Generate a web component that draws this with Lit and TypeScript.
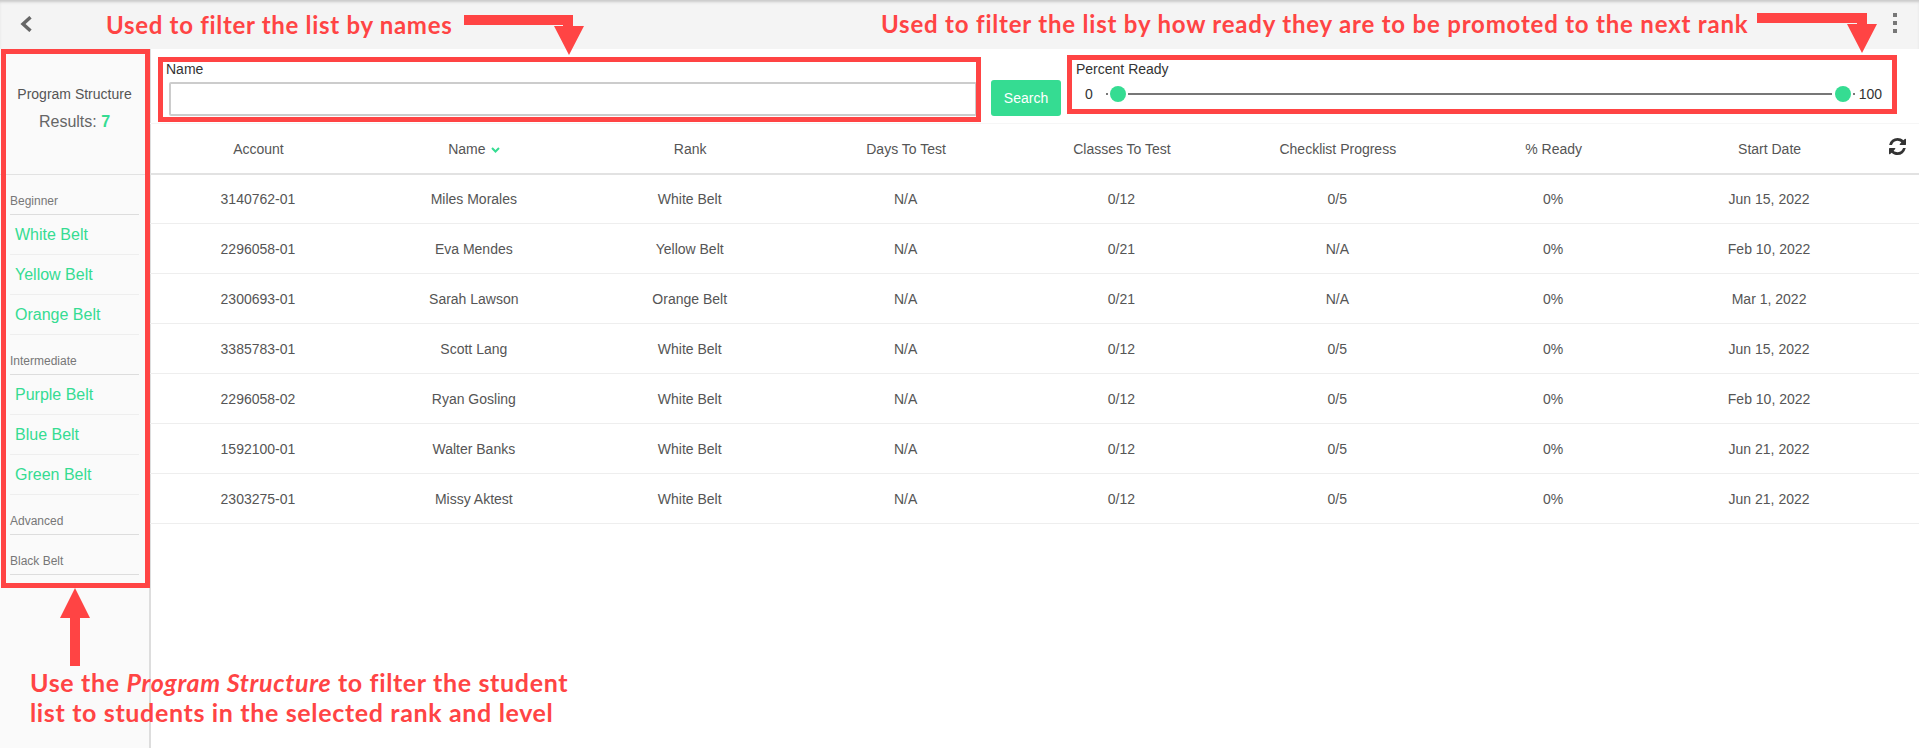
import { LitElement, html, css } from 'lit';
import { customElement } from 'lit/decorators.js';

const columns = ['Account', 'Name', 'Rank', 'Days To Test', 'Classes To Test', 'Checklist Progress', '% Ready', 'Start Date'];

const students = [
  ['3140762-01', 'Miles Morales', 'White Belt', 'N/A', '0/12', '0/5', '0%', 'Jun 15, 2022'],
  ['2296058-01', 'Eva Mendes', 'Yellow Belt', 'N/A', '0/21', 'N/A', '0%', 'Feb 10, 2022'],
  ['2300693-01', 'Sarah Lawson', 'Orange Belt', 'N/A', '0/21', 'N/A', '0%', 'Mar 1, 2022'],
  ['3385783-01', 'Scott Lang', 'White Belt', 'N/A', '0/12', '0/5', '0%', 'Jun 15, 2022'],
  ['2296058-02', 'Ryan Gosling', 'White Belt', 'N/A', '0/12', '0/5', '0%', 'Feb 10, 2022'],
  ['1592100-01', 'Walter Banks', 'White Belt', 'N/A', '0/12', '0/5', '0%', 'Jun 21, 2022'],
  ['2303275-01', 'Missy Aktest', 'White Belt', 'N/A', '0/12', '0/5', '0%', 'Jun 21, 2022'],
];

const levels = [
  { name: 'Beginner', ranks: ['White Belt', 'Yellow Belt', 'Orange Belt'] },
  { name: 'Intermediate', ranks: ['Purple Belt', 'Blue Belt', 'Green Belt'] },
  { name: 'Advanced', ranks: [] },
  { name: 'Black Belt', ranks: [] },
];

@customElement('app-root')
export class AppRoot extends LitElement {
  static styles = css`
    :host {
      display: block;
      position: relative;
      width: 100%;
      height: 748px;
      overflow: hidden;
      font-family: 'Liberation Sans', Arial, sans-serif;
      font-size: 14px;
      color: #555;
      background: #fff;
    }
    .topbar {
      display: flex;
      align-items: center;
      justify-content: space-between;
      height: 49px;
      padding: 0 22px 0 20px;
      box-sizing: border-box;
      background: #f4f4f4;
      box-shadow: inset 0 3px 3px -1px #c8c8c8;
    }
    .back {
      display: block;
      width: 12px;
      height: 16px;
      margin-top: -2px;
    }
    .dots {
      display: flex;
      flex-direction: column;
      gap: 4px;
      margin-top: -3px;
    }
    .dots span {
      width: 4px;
      height: 4px;
      background: #777;
    }
    .body {
      display: flex;
      height: 699px;
    }
    .side {
      flex: 0 0 151px;
      box-sizing: border-box;
      background: #fafafa;
      border-right: 2px solid #ddd;
    }
    .side-head {
      display: flex;
      flex-direction: column;
      align-items: center;
      height: 126px;
      padding-top: 36px;
      box-sizing: border-box;
      border-bottom: 1px solid #e2e2e2;
    }
    .side-title {
      line-height: 18px;
    }
    .results {
      margin-top: 9px;
      font-size: 16px;
      line-height: 20px;
      color: #666;
    }
    .results b {
      color: #35dc92;
    }
    .side-list {
      padding: 0 10px;
    }
    .level {
      display: flex;
      align-items: flex-end;
      height: 40px;
      padding-bottom: 6px;
      box-sizing: border-box;
      font-size: 12px;
      line-height: 14px;
      color: #777;
      border-bottom: 1px solid #ddd;
    }
    .rank {
      display: flex;
      align-items: center;
      height: 40px;
      padding-left: 5px;
      box-sizing: border-box;
      font-size: 16px;
      color: #35dc92;
      border-bottom: 1px solid #eee;
    }
    .main {
      flex: 1;
      min-width: 0;
      margin-left: -1px;
    }
    .filters {
      display: grid;
      grid-template-columns: 808px 70px 1fr;
      column-gap: 14px;
      height: 75px;
      padding: 0 37px 0 19px;
      box-sizing: border-box;
      border-bottom: 1px solid #f6f6f6;
    }
    .field {
      display: flex;
      flex-direction: column;
      padding-top: 12px;
      box-sizing: border-box;
      color: #333;
    }
    .field label {
      line-height: 16px;
      margin-left: -3px;
    }
    .field input {
      height: 34px;
      margin-top: 5px;
      padding: 0;
      box-sizing: border-box;
      background: #fff;
      border: 2px solid #ccc;
      border-radius: 2px;
      outline: none;
    }
    .search {
      align-self: end;
      height: 36px;
      margin-bottom: 7px;
      padding: 0;
      border: none;
      border-radius: 3px;
      background: #35dc92;
      color: #fff;
      font: inherit;
    }
    .range {
      margin-left: 4px;
    }
    .slider {
      display: flex;
      align-items: center;
      height: 16px;
      margin-top: 9px;
    }
    .slider .min {
      margin-left: 6px;
      margin-right: 13px;
    }
    .slider .tick {
      width: 2px;
      height: 2px;
      background: #777;
    }
    .thumb {
      flex: 0 0 16px;
      height: 16px;
      border-radius: 50%;
      background: #35dc92;
      margin: 0 2px 0 2px;
    }
    .thumb.end {
      margin: 0 2px 0 3px;
    }
    .slider .track {
      flex: 1;
      height: 2px;
      background: #777;
    }
    .slider .max {
      margin-left: 4px;
    }
    .row {
      display: grid;
      grid-template-columns: repeat(8, 215.875px) 1fr;
      align-items: center;
      height: 50px;
      box-sizing: border-box;
      border-bottom: 1px solid #eee;
      text-align: center;
    }
    .row.head {
      height: 51px;
      margin-bottom: -1px;
      border-bottom: 2px solid #e2e2e2;
    }
    .row.head .col {
      padding-left: 1px;
    }
    .sort {
      display: inline-block;
      width: 9px;
      height: 6px;
      margin-left: 6px;
      vertical-align: 1px;
    }
    .refresh {
      display: block;
      width: 17px;
      height: 17px;
      margin: -4px 0 0 12px;
    }
    .note {
      position: absolute;
      color: #ff4444;
      font-family: Lato, sans-serif;
      font-weight: 700;
      font-size: 24px;
      letter-spacing: 0.7px;
      line-height: 30px;
      white-space: nowrap;
    }
    .note.names { left: 106px; top: 10px; }
    .note.ready { left: 881px; top: 9px; letter-spacing: 0.8px; }
    .note.structure { left: 30px; top: 667px; font-size: 25px; letter-spacing: 0.65px; }
    .box {
      position: absolute;
      box-sizing: border-box;
      border: 5px solid #ff4444;
    }
    .box.side-box { left: 1px; top: 49px; width: 149px; height: 539px; }
    .box.name-box { left: 158px; top: 57px; width: 823px; height: 65px; }
    .box.ready-box { left: 1067px; top: 55px; width: 830px; height: 59px; }
    .arrows {
      position: absolute;
      left: 0;
      top: 0;
    }
  `;

  render() {
    return html`
      <div class="topbar">
        <svg class="back" viewBox="0 0 12 16" fill="none" stroke="#666" stroke-width="3.4">
          <polyline points="10.500,1.200 3,8 10.500,14.800"></polyline>
        </svg>
        <div class="dots"><span></span><span></span><span></span></div>
      </div>
      <div class="body">
        <aside class="side">
          <div class="side-head">
            <div class="side-title">Program Structure</div>
            <div class="results">Results: <b>7</b></div>
          </div>
          <div class="side-list">
            ${levels.map(
              (level) => html`
                <div class="level">${level.name}</div>
                ${level.ranks.map((rank) => html`<div class="rank">${rank}</div>`)}
              `
            )}
          </div>
        </aside>
        <div class="main">
          <div class="filters">
            <div class="field">
              <label>Name</label>
              <input type="text" />
            </div>
            <button class="search">Search</button>
            <div class="field range">
              <label>Percent Ready</label>
              <div class="slider">
                <span class="min">0</span>
                <span class="tick"></span>
                <span class="thumb"></span>
                <span class="track"></span>
                <span class="thumb end"></span>
                <span class="tick"></span>
                <span class="max">100</span>
              </div>
            </div>
          </div>
          <div class="row head">
            ${columns.map(
              (col) => html`<div class="col">
                ${col}${col === 'Name'
                  ? html`<svg class="sort" viewBox="0 0 9 6" fill="none" stroke="#35dc92" stroke-width="2">
                      <polyline points="1,1 4.500,4.500 8,1"></polyline>
                    </svg>`
                  : ''}
              </div>`
            )}
            <svg class="refresh" viewBox="0 0 1536 1536" fill="#333">
              <path
                d="M1511 928q0 5-1 7-64 268-268 434.500t-478 166.500q-146 0-282.500-55t-243.500-157l-129 129q-19 19-45 19t-45-19-19-45v-448q0-26 19-45t45-19h448q26 0 45 19t19 45-19 45l-137 137q71 66 161 102t187 36q134 0 250-65t186-179q11-17 53-117 8-23 30-23h192q13 0 22.500 9.500t9.500 22.500zm25-800v448q0 26-19 45t-45 19h-448q-26 0-45-19t-19-45 19-45l138-138q-148-137-349-137-134 0-250 65t-186 179q-11 17-53 117-8 23-30 23h-199q-13 0-22.500-9.500t-9.500-22.500v-7q65-268 270-434.500t480-166.500q146 0 284 55.500t245 156.500l130-129q19-19 45-19t45 19 19 45z"
              ></path>
            </svg>
          </div>
          ${students.map(
            (student) => html`<div class="row">
              ${student.map((value) => html`<div>${value}</div>`)}
            </div>`
          )}
        </div>
      </div>

      <svg class="arrows" width="1919" height="748" fill="#ff4444">
        <polygon points="464,15 573,15 573,26 584,26 569,55 554,26 563,26 563,25 464,25"></polygon>
        <polygon points="1757,13 1867,13 1867,24 1877,24 1862,53 1847,24 1857,24 1857,23 1757,23"></polygon>
        <polygon points="75,588 90,618 80,618 80,666 70,666 70,618 60,618"></polygon>
      </svg>
      <div class="box side-box"></div>
      <div class="box name-box"></div>
      <div class="box ready-box"></div>
      <div class="note names">Used to filter the list by names</div>
      <div class="note ready">Used to filter the list by how ready they are to be promoted to the next rank</div>
      <div class="note structure">
        Use the <i>Program Structure</i> to filter the student<br />list to students in the selected rank and level
      </div>
    `;
  }
}
